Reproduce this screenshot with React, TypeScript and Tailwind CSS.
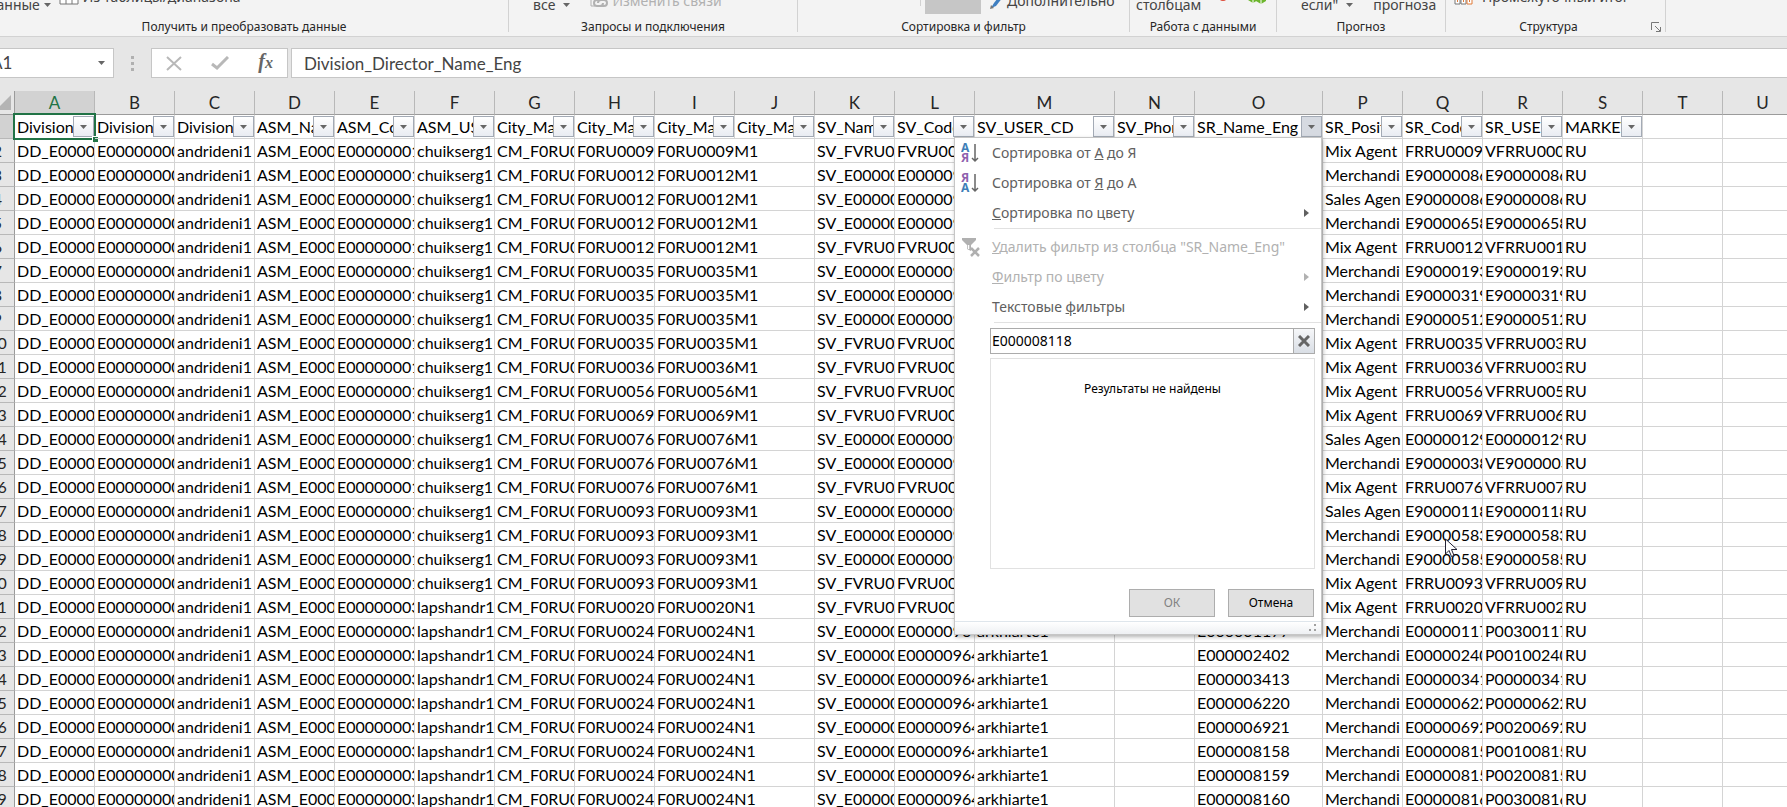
import { useState } from "react";
import type { ReactNode } from "react";
import clsx from "clsx";

type Column = { letter: string; name?: string; width: string };

const COLUMNS: Column[] = [
  { letter: "A", name: "Division_Director_Name_Eng", width: "w-20" },
  { letter: "B", name: "Division_Director_Code", width: "w-20" },
  { letter: "C", name: "Division_Director_User", width: "w-20" },
  { letter: "D", name: "ASM_Name_Eng", width: "w-20" },
  { letter: "E", name: "ASM_Code", width: "w-20" },
  { letter: "F", name: "ASM_USER_CD", width: "w-20" },
  { letter: "G", name: "City_Manager_Name", width: "w-20" },
  { letter: "H", name: "City_Manager_Code", width: "w-20" },
  { letter: "I", name: "City_Manager_User", width: "w-20" },
  { letter: "J", name: "City_Manager_Phone", width: "w-20" },
  { letter: "K", name: "SV_Name_Eng", width: "w-20" },
  { letter: "L", name: "SV_Code", width: "w-20" },
  { letter: "M", name: "SV_USER_CD", width: "w-[140px]" },
  { letter: "N", name: "SV_Phone", width: "w-20" },
  { letter: "O", name: "SR_Name_Eng", width: "w-32" },
  { letter: "P", name: "SR_Position", width: "w-20" },
  { letter: "Q", name: "SR_Code", width: "w-20" },
  { letter: "R", name: "SR_USER_CD", width: "w-20" },
  { letter: "S", name: "MARKET", width: "w-20" },
  { letter: "T", width: "w-20" },
  { letter: "U", width: "w-20" },
];

// city code, SV code, SV user, SR name, position, SR code, SR user
const RECORDS: string[][] = [
  ["0009", "FVRU00", "", "", "Mix Agent", "FRRU0009", "VFRRU000"],
  ["0012", "E000009", "", "", "Merchandi", "E90000086", "E90000086"],
  ["0012", "E000009", "", "", "Sales Agen", "E90000086", "E90000086"],
  ["0012", "E000009", "", "", "Merchandi", "E90000658", "E90000658"],
  ["0012", "FVRU00", "", "", "Mix Agent", "FRRU0012", "VFRRU001"],
  ["0035", "E000009", "", "", "Merchandi", "E90000193", "E90000193"],
  ["0035", "E000009", "", "", "Merchandi", "E90000319", "E90000319"],
  ["0035", "E000009", "", "", "Merchandi", "E90000512", "E90000512"],
  ["0035", "FVRU00", "", "", "Mix Agent", "FRRU0035", "VFRRU003"],
  ["0036", "FVRU00", "", "", "Mix Agent", "FRRU0036", "VFRRU003"],
  ["0056", "FVRU00", "", "", "Mix Agent", "FRRU0056", "VFRRU005"],
  ["0069", "FVRU00", "", "", "Mix Agent", "FRRU0069", "VFRRU006"],
  ["0076", "E000009", "", "", "Sales Agen", "E00000129", "E00000129"],
  ["0076", "E000009", "", "", "Merchandi", "E90000038", "VE9000003"],
  ["0076", "FVRU00", "", "", "Mix Agent", "FRRU0076", "VFRRU007"],
  ["0093", "E000009", "", "", "Sales Agen", "E90000118", "E90000118"],
  ["0093", "E000009", "", "", "Merchandi", "E90000583", "E90000583"],
  ["0093", "E000009", "", "", "Merchandi", "E90000585", "E90000585"],
  ["0093", "FVRU00", "", "", "Mix Agent", "FRRU0093", "VFRRU009"],
  ["0020", "FVRU00", "", "", "Mix Agent", "FRRU0020", "VFRRU002"],
  ["0024", "E00000964", "arkhiarte1", "E000001177", "Merchandi", "E00000117", "P00300117"],
  ["0024", "E00000964", "arkhiarte1", "E000002402", "Merchandi", "E00000240", "P00100240"],
  ["0024", "E00000964", "arkhiarte1", "E000003413", "Merchandi", "E00000341", "P00000341"],
  ["0024", "E00000964", "arkhiarte1", "E000006220", "Merchandi", "E00000622", "P00000622"],
  ["0024", "E00000964", "arkhiarte1", "E000006921", "Merchandi", "E00000692", "P00200692"],
  ["0024", "E00000964", "arkhiarte1", "E000008158", "Merchandi", "E00000815", "P00100815"],
  ["0024", "E00000964", "arkhiarte1", "E000008159", "Merchandi", "E00000815", "P00200815"],
  ["0024", "E00000964", "arkhiarte1", "E000008160", "Merchandi", "E00000816", "P00300816"],
];

// The first 19 records belong to one area manager, the rest to another.
const FIRST_AREA_SIZE = 19;

function Caret() {
  return (
    <svg className="shrink-0" width="7" height="4" viewBox="0 0 7 4">
      <path d="M0 0h7L3.500 4z" fill="#666" />
    </svg>
  );
}

function RibbonGroup({
  label,
  className,
  corner,
  children,
}: {
  label: string;
  className: string;
  corner?: ReactNode;
  children: ReactNode;
}) {
  return (
    <section className={clsx("flex shrink-0 items-end", className)}>
      <div className="min-w-0 flex-1">
        <div className="mb-1 flex h-12 items-end whitespace-nowrap text-sm leading-[18px] text-[#444]">
          {children}
        </div>
        <div className="flex h-[18px] items-center">
          <h2 className="flex-1 whitespace-nowrap text-center text-xs text-[#262626]">{label}</h2>
          {corner}
        </div>
      </div>
      <div className="mb-1 h-16 w-px bg-[#d2d2d2]" />
    </section>
  );
}

function Ribbon() {
  return (
    <header className="flex h-[37px] items-end overflow-hidden border-b border-[#d2d2d2] bg-[#f3f3f3]">
      <RibbonGroup label="Получить и преобразовать данные" className="-ml-5 w-[529px]">
        <button type="button" className="ml-2 flex items-center gap-1">
          данные <Caret />
        </button>
        <button type="button" className="ml-2 flex items-center gap-1 pb-2">
          <svg width="20" height="18" viewBox="0 0 20 18">
            <path d="M1 1h18v15H1zM1 6h18M1 11h18M7 1v15M13 1v15" fill="#fff" stroke="#777" />
          </svg>
          Из таблицы/диапазона
        </button>
      </RibbonGroup>
      <RibbonGroup label="Запросы и подключения" className="w-[289px]">
        <button type="button" className="ml-6 flex items-center gap-2">
          все <Caret />
        </button>
        <button
          type="button"
          disabled
          className="ml-5 flex items-center gap-1 pb-1 text-[#b1b1b1]"
        >
          <svg width="18" height="18" viewBox="0 0 18 18" fill="none" stroke="#b1b1b1">
            <path d="M1 0v14h4" />
            <path
              d="M9 8H7a3 3 0 0 0 0 6h3a3 3 0 0 0 3-3M11 14h3a3 3 0 0 0 0-6h-3a3 3 0 0 0-3 3"
              strokeWidth="2"
            />
          </svg>
          Изменить связи
        </button>
      </RibbonGroup>
      <RibbonGroup label="Сортировка и фильтр" className="w-[332px]">
        <div className="mb-2 ml-[122px] h-8 w-px bg-[#d2d2d2]" />
        <button
          type="button"
          aria-label="Фильтр"
          className="ml-1 h-12 w-14 bg-[#c6c6c6]"
        />
        <button type="button" className="ml-2 flex items-center gap-1 pb-1">
          <svg width="14" height="18" viewBox="0 0 14 18">
            <path d="M12 2 5 11l-3 5 5-2 7-9z" fill="#3f7fc1" />
            <path d="m1 17 1-4 3 3z" fill="#777" />
          </svg>
          Дополнительно
        </button>
      </RibbonGroup>
      <RibbonGroup label="Работа с данными" className="w-[147px]">
        <button type="button" className="ml-1.5">
          столбцам
        </button>
        <svg className="mb-3 ml-2" width="18" height="18" viewBox="0 0 18 18">
          <path d="M1 2h10v13H1z" fill="#fff" stroke="#777" />
          <circle cx="14" cy="13" r="3" fill="none" stroke="#dd4b39" strokeWidth="2" />
        </svg>
        <svg className="mb-2 ml-5" width="20" height="20" viewBox="0 0 20 20">
          <path d="m6 5 5 3v6l-5 3-5-3V8zM14 6l5 3v6l-5 3-5-3V9z" fill="#6cb52d" />
          <path d="m1 8 5 3 5-3M6 11v6M9 9l5 3 5-3M14 12v6" fill="none" stroke="#fff" />
        </svg>
      </RibbonGroup>
      <RibbonGroup label="Прогноз" className="w-[169px]">
        <button type="button" className="ml-6 flex items-center gap-2">
          если" <Caret />
        </button>
        <button type="button" className="ml-5">
          прогноза
        </button>
      </RibbonGroup>
      <RibbonGroup
        label="Структура"
        className="w-[220px]"
        corner={
          <button type="button" aria-label="Параметры структуры" className="mr-1">
            <svg width="10" height="10" viewBox="0 0 10 10" fill="none" stroke="#777">
              <path d="M.5 8V.5H8M4 4l5 5M9.500 5v4.500H5" />
            </svg>
          </button>
        }
      >
        <button type="button" className="ml-2 flex items-center gap-2 pb-2">
          <svg width="20" height="18" viewBox="0 0 20 18" fill="#fff" stroke="#777">
            <path d="M1 7h5v9H1zM7 7h5v9H7z" />
            <path d="M13 7h5v9h-5z" stroke="#e07b39" />
            <path d="M3 13h1M9 13h1M15 13h1" stroke="#e07b39" strokeWidth="2" />
          </svg>
          Промежуточный итог
        </button>
      </RibbonGroup>
    </header>
  );
}

function FormulaBar() {
  return (
    <div className="flex h-[54px] shrink-0 items-center pb-0.5 text-[#444]">
      <div className="-ml-5 flex h-[30px] w-[134px] items-center justify-between border border-[#c6c6c6] bg-white pr-2 pl-2.5">
        <input
          aria-label="Имя"
          defaultValue="A1"
          className="w-20 font-['Lato',sans-serif] text-[17px] outline-none"
        />
        <Caret />
      </div>
      <svg className="mx-[17px]" width="3" height="15" viewBox="0 0 3 15" fill="#b0b0b0">
        <path d="M0 0h3v3H0zM0 6h3v3H0zM0 12h3v3H0z" />
      </svg>
      <div className="flex h-[30px] w-[137px] items-center justify-between border border-[#c6c6c6] bg-white px-3.5">
        <button type="button" aria-label="Отмена ввода">
          <svg width="16" height="15" viewBox="0 0 16 15" fill="none" stroke="#b8b8b8" strokeWidth="2">
            <path d="m1 1 14 13M15 1 1 14" />
          </svg>
        </button>
        <button type="button" aria-label="Ввод">
          <svg width="18" height="14" viewBox="0 0 18 14" fill="none" stroke="#b8b8b8" strokeWidth="3">
            <path d="m1 8 5 4L17 1" />
          </svg>
        </button>
        <button
          type="button"
          aria-label="Вставить функцию"
          className="font-['Liberation_Serif',serif] text-xl leading-5 font-bold text-[#666] italic"
        >
          f<span className="text-base">x</span>
        </button>
      </div>
      <input
        aria-label="Строка формул"
        defaultValue="Division_Director_Name_Eng"
        className="ml-[3px] h-[30px] min-w-0 flex-1 border border-r-0 border-[#c6c6c6] bg-white pl-3 font-['Lato',sans-serif] text-[17px] outline-none"
      />
    </div>
  );
}

function SortIcon({ reverse }: { reverse?: boolean }) {
  const letters = reverse ? ["Я", "А"] : ["А", "Я"];
  const colors = reverse ? ["#8e5fae", "#3f7fb8"] : ["#3f7fb8", "#8e5fae"];
  return (
    <svg width="18" height="20" viewBox="0 0 18 20" className="font-bold">
      <text x="0" y="9" fontSize="12" fill={colors[0]}>
        {letters[0]}
      </text>
      <text x="0" y="19" fontSize="12" fill={colors[1]}>
        {letters[1]}
      </text>
      <path d="M14 1v17M11 15l3 3 3-3" fill="none" stroke="#666" strokeWidth="1.500" />
    </svg>
  );
}

function ClearFilterIcon() {
  return (
    <svg width="20" height="20" viewBox="0 0 20 20">
      <path d="M1 1h14v2l-5 5v6l-4-2V8L1 3z" fill="#b0b0b0" />
      <path d="M7.500 8v4" stroke="#fff" strokeWidth="1.500" />
      <path d="m10 11 8 8M18 11l-8 8" stroke="#b0b0b0" strokeWidth="2.500" />
    </svg>
  );
}

function MenuItem({
  icon,
  submenu,
  disabled,
  children,
}: {
  icon?: ReactNode;
  submenu?: boolean;
  disabled?: boolean;
  children: ReactNode;
}) {
  return (
    <button
      type="button"
      disabled={disabled}
      className="flex h-[30px] w-full items-center pr-3 text-left text-[#606060] disabled:text-[#b1b1b1]"
    >
      <span className="flex w-[37px] shrink-0 pl-1.5">{icon}</span>
      <span className="flex-1 whitespace-nowrap">{children}</span>
      {submenu && (
        <svg width="5" height="8" viewBox="0 0 5 8" fill="currentColor">
          <path d="M0 0v8l5-4z" />
        </svg>
      )}
    </button>
  );
}

function FilterMenu() {
  const [query, setQuery] = useState("E000008118");

  return (
    <div className="absolute top-[22px] right-0 z-10 w-[368px] border border-[#c6c6c6] bg-white font-['Noto_Sans',sans-serif] text-sm font-normal shadow-[1px_2px_4px_rgba(0,0,0,0.3)]">
      <MenuItem icon={<SortIcon />}>
        Сортировка от <u>А</u> до Я
      </MenuItem>
      <MenuItem icon={<SortIcon reverse />}>
        Сортировка от <u>Я</u> до А
      </MenuItem>
      <MenuItem submenu>
        <u>С</u>ортировка по цвету
      </MenuItem>
      <hr className="mb-[3px] ml-[39px] border-[#e1e1e1]" />
      <MenuItem icon={<ClearFilterIcon />} disabled>
        <u>У</u>далить фильтр из столбца "SR_Name_Eng"
      </MenuItem>
      <MenuItem submenu disabled>
        <u>Ф</u>ильтр по цвету
      </MenuItem>
      <MenuItem submenu>
        Текстовые <u>ф</u>ильтры
      </MenuItem>
      <hr className="mb-[5px] ml-[39px] border-[#e1e1e1]" />
      <div className="mr-1.5 ml-[35px] flex h-[26px] border border-[#ababab]">
        <input
          aria-label="Поиск"
          value={query}
          onChange={(e) => setQuery(e.target.value)}
          className="min-w-0 flex-1 pl-px text-black outline-none"
        />
        <button
          type="button"
          aria-label="Очистить поиск"
          onClick={() => setQuery("")}
          className="flex w-[21px] items-center justify-center border-l border-[#ababab] bg-linear-to-b from-[#f6f7f9] to-[#d9dee5]"
        >
          <svg width="12" height="12" viewBox="0 0 12 12" stroke="#666" strokeWidth="3">
            <path d="m1 1 10 10M11 1 1 11" />
          </svg>
        </button>
      </div>
      <div className="mt-1 mr-1.5 ml-[35px] h-[211px] border border-[#e1e1e1] pt-5 text-center text-xs leading-5 text-black">
        Результаты не найдены
      </div>
      <div className="mt-5 mr-[7px] flex justify-end gap-[13px] text-xs">
        <button
          type="button"
          disabled
          className="h-7 w-[86px] border border-[#adadad] bg-[#e1e1e1] text-[#838383]"
        >
          ОК
        </button>
        <button
          type="button"
          className="h-7 w-[86px] border border-[#adadad] bg-[#e1e1e1] text-black"
        >
          Отмена
        </button>
      </div>
      <div className="mt-1 flex h-[13px] items-center justify-end border-t border-[#dfe6ec] bg-linear-to-b from-white to-[#eef0f3] pr-1">
        <svg width="8" height="8" viewBox="0 0 8 8" fill="#a0a0a0">
          <path d="M5 0h2v2H5zM5 5h2v2H5zM0 5h2v2H0z" />
        </svg>
      </div>
    </div>
  );
}

function HeaderCell({ column }: { column: Column }) {
  const filtered = column.letter === "O";
  const selected = column.letter === "A";

  if (!column.name) return <td className="border-r border-b border-[#d4d4d4]" />;

  return (
    <th
      scope="col"
      className="relative h-6 border-r border-b border-[#d4d4d4] p-0 text-left font-normal"
    >
      <div className="flex h-[23px] items-center">
        <span className="min-w-0 flex-1 overflow-hidden pl-0.5 leading-[22px] whitespace-nowrap">
          {column.name}
        </span>
        <button
          type="button"
          aria-label={`Фильтр ${column.name}`}
          className={clsx(
            "flex size-[21px] shrink-0 items-center justify-center border border-[#a3aab5]",
            filtered ? "bg-[#d6dae1]" : "bg-linear-to-b from-white to-[#e9ecf2]"
          )}
        >
          <Caret />
        </button>
      </div>
      {selected && (
        <span className="pointer-events-none absolute -inset-0.5 border-2 border-[#217346]">
          <span className="absolute -right-1 -bottom-1 size-[6px] border-t border-l border-white bg-[#217346]" />
        </span>
      )}
      {filtered && <FilterMenu />}
    </th>
  );
}

function Cell({ children, span }: { children?: ReactNode; span?: number }) {
  return (
    <td
      colSpan={span}
      className="h-6 overflow-hidden border-r border-b border-[#d4d4d4] py-0 pr-0 pl-0.5 leading-[22px] whitespace-nowrap"
    >
      {children}
    </td>
  );
}

function Sheet() {
  return (
    <main className="relative min-h-0 flex-1 overflow-hidden">
      {/* scrolled a little to the right, so row numbers are cut */}
      <table className="-ml-[19px] w-[1821px] table-fixed border-separate border-spacing-0 bg-white font-['Lato',sans-serif] text-base text-black">
        <colgroup>
          <col className="w-[34px]" />
          {COLUMNS.map((c) => (
            <col key={c.letter} className={c.width} />
          ))}
        </colgroup>
        <thead>
          <tr className="bg-[#e6e6e6]">
            <td className="h-6 border-r border-b border-[#9b9b9b] p-0">
              <svg className="ml-auto mr-[3px]" width="15" height="15" viewBox="0 0 15 15">
                <path d="M15 0v15H0z" fill="#b4b4b4" />
              </svg>
            </td>
            {COLUMNS.map((c) => (
              <th
                key={c.letter}
                scope="col"
                className={clsx(
                  "h-6 border-r border-b border-r-[#b8b8b8] border-b-[#9b9b9b] p-0 text-[17px] leading-[23px] font-normal",
                  c.letter === "A" ? "bg-[#d2d2d2] text-[#217346]" : "text-[#262626]"
                )}
              >
                {c.letter}
              </th>
            ))}
          </tr>
          <tr>
            <td className="h-6 border-r border-b border-r-[#9b9b9b] border-b-[#b8b8b8] bg-[#d2d2d2] p-0" />
            {COLUMNS.map((c) => (
              <HeaderCell key={c.letter} column={c} />
            ))}
          </tr>
        </thead>
        <tbody>
          {RECORDS.map(([city, sv, svUser, name, position, code, user], i) => {
            const first = i < FIRST_AREA_SIZE;
            return (
              <tr key={i}>
                <th
                  scope="row"
                  className="h-6 border-r border-b border-r-[#9b9b9b] border-b-[#b8b8b8] bg-[#e6e6e6] p-0 leading-[22px] font-normal text-[#262626]"
                >
                  {i + 2}
                </th>
                <Cell>DD_E0000</Cell>
                <Cell>E00000000</Cell>
                <Cell>andrideni1</Cell>
                <Cell>ASM_E000</Cell>
                <Cell>{first ? "E00000001" : "E00000003"}</Cell>
                <Cell>{first ? "chuikserg1" : "lapshandr1"}</Cell>
                <Cell>CM_F0RU0</Cell>
                <Cell>F0RU{city}</Cell>
                <Cell span={2}>
                  F0RU{city}
                  {first ? "M1" : "N1"}
                </Cell>
                <Cell>{sv.startsWith("F") ? "SV_FVRU0" : "SV_E00000"}</Cell>
                <Cell>{sv}</Cell>
                <Cell>{svUser}</Cell>
                <Cell />
                <Cell>{name}</Cell>
                <Cell>{position}</Cell>
                <Cell>{code}</Cell>
                <Cell>{user}</Cell>
                <Cell>RU</Cell>
                <Cell />
                <Cell />
              </tr>
            );
          })}
        </tbody>
      </table>
      <svg
        className="pointer-events-none absolute top-[447px] left-[1445px]"
        width="13"
        height="20"
        viewBox="0 0 13 20"
      >
        <path
          d="M.5 1v15l3.500-3.500 2.500 6 2.500-1-2.500-6H12z"
          fill="#fff"
          stroke="#223"
        />
      </svg>
    </main>
  );
}

export default function App() {
  return (
    <div className="flex h-screen flex-col overflow-hidden bg-[#e6e6e6] font-['Noto_Sans',sans-serif]">
      <Ribbon />
      <FormulaBar />
      <Sheet />
    </div>
  );
}
